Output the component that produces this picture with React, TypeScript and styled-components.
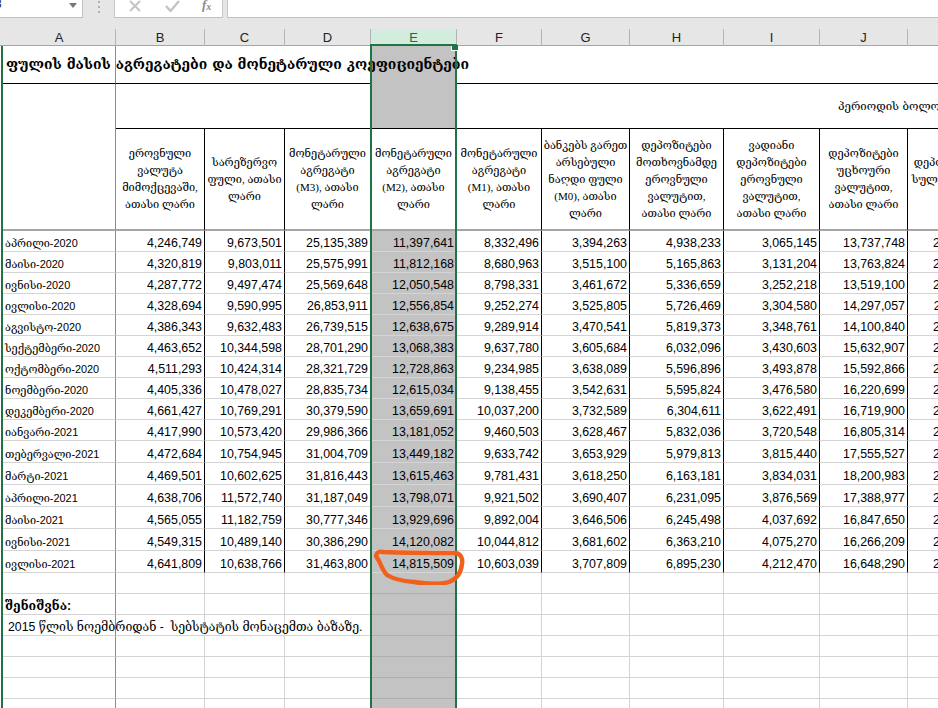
import styled, { createGlobalStyle } from "styled-components";

const GlobalStyle = createGlobalStyle`
  html, body {
    margin: 0;
    padding: 0;
    background: #fff;
  }
`;

// cell edges measured off the sheet: A..K plus one long empty column for the merged header
const COLUMN_WIDTHS = [113, 89, 80, 86, 86, 85, 88, 94, 96, 88, 83, 337];
const COLUMN_LETTERS = ["A", "B", "C", "D", "E", "F", "G", "H", "I", "J", "K", ""];
const SELECTED = 4;

const HEADERS = [
  ["ეროვნული", "ვალუტა", "მიმოქცევაში,", "ათასი ლარი"],
  ["სარეზერვო", "ფული, ათასი", "ლარი"],
  ["მონეტარული", "აგრეგატი", "(M3), ათასი", "ლარი"],
  ["მონეტარული", "აგრეგატი", "(M2), ათასი", "ლარი"],
  ["მონეტარული", "აგრეგატი", "(M1), ათასი", "ლარი"],
  ["ბანკებს გარეთ", "არსებული", "ნაღდი ფული", "(M0), ათასი", "ლარი"],
  ["დეპოზიტები", "მოთხოვნამდე", "ეროვნული", "ვალუტით,", "ათასი ლარი"],
  ["ვადიანი", "დეპოზიტები", "ეროვნული", "ვალუტით,", "ათასი ლარი"],
  ["დეპოზიტები", "უცხოური", "ვალუტით,", "ათასი ლარი"],
  ["დეპოზიტები", "სულ ვალუტა", "(M3)"],
];

const ROWS = [
  ["აპრილი-2020", "4,246,749", "9,673,501", "25,135,389", "11,397,641", "8,332,496", "3,394,263", "4,938,233", "3,065,145", "13,737,748", "2,120,310"],
  ["მაისი-2020", "4,320,819", "9,803,011", "25,575,991", "11,812,168", "8,680,963", "3,515,100", "5,165,863", "3,131,204", "13,763,824", "2,575,991"],
  ["ივნისი-2020", "4,287,772", "9,497,474", "25,569,648", "12,050,548", "8,798,331", "3,461,672", "5,336,659", "3,252,218", "13,519,100", "2,569,648"],
  ["ივლისი-2020", "4,328,694", "9,590,995", "26,853,911", "12,556,854", "9,252,274", "3,525,805", "5,726,469", "3,304,580", "14,297,057", "2,853,911"],
  ["აგვისტო-2020", "4,386,343", "9,632,483", "26,739,515", "12,638,675", "9,289,914", "3,470,541", "5,819,373", "3,348,761", "14,100,840", "2,739,515"],
  ["სექტემბერი-2020", "4,463,652", "10,344,598", "28,701,290", "13,068,383", "9,637,780", "3,605,684", "6,032,096", "3,430,603", "15,632,907", "2,701,290"],
  ["ოქტომბერი-2020", "4,511,293", "10,424,314", "28,321,729", "12,728,863", "9,234,985", "3,638,089", "5,596,896", "3,493,878", "15,592,866", "2,321,729"],
  ["ნოემბერი-2020", "4,405,336", "10,478,027", "28,835,734", "12,615,034", "9,138,455", "3,542,631", "5,595,824", "3,476,580", "16,220,699", "2,835,734"],
  ["დეკემბერი-2020", "4,661,427", "10,769,291", "30,379,590", "13,659,691", "10,037,200", "3,732,589", "6,304,611", "3,622,491", "16,719,900", "2,379,590"],
  ["იანვარი-2021", "4,417,990", "10,573,420", "29,986,366", "13,181,052", "9,460,503", "3,628,467", "5,832,036", "3,720,548", "16,805,314", "2,986,366"],
  ["თებერვალი-2021", "4,472,684", "10,754,945", "31,004,709", "13,449,182", "9,633,742", "3,653,929", "5,979,813", "3,815,440", "17,555,527", "2,004,709"],
  ["მარტი-2021", "4,469,501", "10,602,625", "31,816,443", "13,615,463", "9,781,431", "3,618,250", "6,163,181", "3,834,031", "18,200,983", "2,816,443"],
  ["აპრილი-2021", "4,638,706", "11,572,740", "31,187,049", "13,798,071", "9,921,502", "3,690,407", "6,231,095", "3,876,569", "17,388,977", "2,187,049"],
  ["მაისი-2021", "4,565,055", "11,182,759", "30,777,346", "13,929,696", "9,892,004", "3,646,506", "6,245,498", "4,037,692", "16,847,650", "2,777,346"],
  ["ივნისი-2021", "4,549,315", "10,489,140", "30,386,290", "14,120,082", "10,044,812", "3,681,602", "6,363,210", "4,075,270", "16,266,209", "2,386,290"],
  ["ივლისი-2021", "4,641,809", "10,638,766", "31,463,800", "14,815,509", "10,603,039", "3,707,809", "6,895,230", "4,212,470", "16,648,290", "2,463,800"],
];

const NOTES = ["", "შენიშვნა:", "2015 წლის ნოემბრიდან -  სებსტატის მონაცემთა ბაზაზე.", "", "", "", ""];

export default function App() {
  return (
    <Window>
      <GlobalStyle />
      <FormulaBar>
        <NameBox>
          <NameText>3</NameText>
          <NameCaret />
        </NameBox>
        <Grip>
          <GripDot />
          <GripDot />
          <GripDot />
        </Grip>
        <FormulaButtons>
          <svg width="14" height="12" viewBox="0 0 14 12">
            <path d="M2 1 L12 11 M12 1 L2 11" stroke="#c4c4c4" strokeWidth="2" fill="none" />
          </svg>
          <svg width="15" height="12" viewBox="0 0 15 12">
            <path d="M1 6 L5.5 11 L14 1" stroke="#c4c4c4" strokeWidth="2.4" fill="none" />
          </svg>
          <FxLabel>
            f<sub>x</sub>
          </FxLabel>
        </FormulaButtons>
        <FormulaInput />
      </FormulaBar>

      <ColumnHeaders>
        {COLUMN_LETTERS.map((letter, i) => (
          <ColumnHeader key={i} $selected={i === SELECTED}>
            {letter}
          </ColumnHeader>
        ))}
      </ColumnHeaders>

      <Sheet>
        <Table>
          <colgroup>
            {COLUMN_WIDTHS.map((w, i) => (
              <col key={i} width={w} />
            ))}
          </colgroup>
          <tbody>
            <tr>
              <TitleCell $edge>ფულის მასის აგრეგატები და მონეტარული კოეფიციენტები</TitleCell>
              <TitleCell colSpan={3} />
              <TitleCell $grey />
              <TitleCell colSpan={7} />
            </tr>
            <tr>
              <StubCell rowSpan={2} />
              <GroupCell colSpan={3} />
              <GroupCell $grey />
              <GroupCell colSpan={7}>პერიოდის ბოლოს</GroupCell>
            </tr>
            <tr>
              {HEADERS.map((lines, i) => (
                <HeaderCell key={i}>
                  {lines.map((line) => (
                    <HeaderLine key={line}>{line}</HeaderLine>
                  ))}
                </HeaderCell>
              ))}
              <HeaderCell />
            </tr>
            {ROWS.map(([label, ...values], r) => (
              <DataRow key={r} $tall={r >= 10}>
                <LabelCell>{label}</LabelCell>
                {values.map((value, c) => (
                  <NumberCell key={c} $grey={c + 1 === SELECTED}>
                    {value}
                  </NumberCell>
                ))}
                <NumberCell />
              </DataRow>
            ))}
            {NOTES.map((note, r) => (
              <DataRow key={r}>
                <NoteCell $bold={r === 1} $indent={r === 2}>
                  {note}
                </NoteCell>
                {COLUMN_LETTERS.slice(1).map((letter, c) => (
                  <BlankCell key={c} $grey={c + 1 === SELECTED} />
                ))}
              </DataRow>
            ))}
          </tbody>
        </Table>

        <Selection>
          <SelectionHandle />
        </Selection>

        <Scribble viewBox="0 0 100 42" width="100" height="42">
          <path
            d="M7 13 C8 9 10 8 14 9 C40 10 70 10 87 10 C92 11 94 16 93 21 C92 30 88 36 80 39 C70 42 58 41 45 39 C33 38 24 36 18 32 C14 28 12 22 10 18 Z"
            fill="none"
            stroke="#f2611c"
            strokeWidth="4.4"
            strokeLinejoin="round"
          />
        </Scribble>
      </Sheet>
    </Window>
  );
}

const Window = styled.div`
  width: 938px;
  height: 708px;
  overflow: hidden;
  background: #fff;
`;

const FormulaBar = styled.div`
  display: flex;
  height: 18px;
  background: #e6e6e6;
`;

const NameBox = styled.div`
  width: 83px;
  flex: none;
  box-sizing: border-box;
  display: flex;
  justify-content: space-between;
  background: #fff;
  border-right: 1px solid #c0c0c0;
  border-bottom: 1px solid #c0c0c0;
  overflow: hidden;
`;

const NameText = styled.span`
  margin: -3px 0 0 -5px;
  font: 12px "Liberation Sans", sans-serif;
  color: #222;
`;

const NameCaret = styled.span`
  width: 0;
  height: 0;
  margin: 3px 5px 0 0;
  border-left: 4px solid transparent;
  border-right: 4px solid transparent;
  border-top: 5px solid #777;
`;

const Grip = styled.div`
  width: 31px;
  flex: none;
  display: flex;
  flex-direction: column;
  align-items: center;
  gap: 2px;
`;

const GripDot = styled.span`
  width: 2px;
  height: 2px;
  margin-top: 1px;
  background: #b0b0b0;
`;

const FormulaButtons = styled.div`
  width: 109px;
  flex: none;
  box-sizing: border-box;
  display: flex;
  align-items: flex-start;
  gap: 23px;
  padding-left: 13px;
  background: #fff;
  border-left: 1px solid #c8c8c8;
  border-right: 1px solid #c8c8c8;
  border-bottom: 1px solid #c0c0c0;
`;

const FxLabel = styled.span`
  margin: -3px 0 0 -1px;
  font: italic bold 13px "Liberation Serif", serif;
  color: #8a8a8a;

  sub {
    font-size: 10px;
    vertical-align: -1px;
  }
`;

const FormulaInput = styled.div`
  flex: 1;
  margin-left: 4px;
  background: #fff;
  border-left: 1px solid #c8c8c8;
  border-bottom: 1px solid #c0c0c0;
`;

const ColumnHeaders = styled.div`
  display: grid;
  grid-template-columns: 3px ${COLUMN_WIDTHS.map((w) => `${w}px`).join(" ")};
  height: 28px;
  box-sizing: border-box;
  padding-top: 11px;
  background: #e6e6e6;
  border-bottom: 1px solid #a6a6a6;

  &::before {
    content: "";
  }
`;

const ColumnHeader = styled.div<{ $selected?: boolean }>`
  box-sizing: border-box;
  text-align: center;
  font: 13px/17px "Liberation Sans", sans-serif;
  color: ${(p) => (p.$selected ? "#1d6b41" : "#222")};
  background: ${(p) => (p.$selected ? "#d2ecdd" : "transparent")};
  border-right: 1px solid #b4b4b4;
  min-width: 0;
`;

const Sheet = styled.div`
  position: relative;
  margin-left: 1px;
  border-left: 2px solid #217346;
`;

const Table = styled.table`
  border-collapse: separate;
  border-spacing: 0;
  table-layout: fixed;
  width: 1325px;

  td {
    box-sizing: border-box;
    padding: 0;
    background: #fff;
  }
`;

const TitleCell = styled.td<{ $edge?: boolean; $grey?: boolean }>`
  height: 38px;
  white-space: nowrap;
  padding: 0 0 2px 3px !important;
  font: bold 13.9px "DejaVu Serif", serif;
  color: #000;
  border-bottom: ${(p) => (p.$grey ? "1px solid #c3c3c3" : "1px solid #000")};
  border-right: ${(p) => (p.$edge ? "1px solid #8c8c8c" : "0")};
  ${(p) => p.$grey && "background: #c3c3c3 !important;"}
`;

const StubCell = styled.td`
  border-right: 1px solid #8c8c8c;
  border-bottom: 2px solid #a6a6a6;
`;

const GroupCell = styled.td<{ $grey?: boolean }>`
  height: 45px;
  text-align: center;
  white-space: nowrap;
  font: 11.4px "DejaVu Serif", serif;
  color: #000;
  border-bottom: 1px solid #000;
  ${(p) => p.$grey && "background: #c3c3c3 !important;"}
`;

const HeaderCell = styled.td`
  height: 102px;
  text-align: center;
  vertical-align: middle;
  white-space: nowrap;
  overflow: hidden;
  border-right: 1px solid #000;
  border-bottom: 2px solid #a6a6a6;
`;

const HeaderLine = styled.div`
  font: 11px/17px "Liberation Serif", "DejaVu Serif", serif;
  color: #000;
`;

const DataRow = styled.tr<{ $tall?: boolean }>`
  height: ${(p) => (p.$tall ? 22 : 21)}px;
`;

const LabelCell = styled.td`
  padding-left: 2px !important;
  vertical-align: bottom;
  white-space: nowrap;
  font: 10.9px/16px "Liberation Sans", "DejaVu Serif", serif;
  color: #000;
  border-right: 1px solid #8c8c8c;
  border-bottom: 1px solid #d4d4d4;
`;

const NumberCell = styled.td<{ $grey?: boolean }>`
  padding-right: 2px !important;
  vertical-align: bottom;
  text-align: right;
  white-space: nowrap;
  font: 12.4px/16px "Liberation Sans", sans-serif;
  color: #000;
  border-right: 1px solid #000;
  border-bottom: 1px solid #d4d4d4;
  ${(p) => p.$grey && "background: #c3c3c3 !important;"}
`;

const NoteCell = styled.td<{ $bold?: boolean; $indent?: boolean }>`
  padding-left: ${(p) => (p.$indent ? 5 : 2)}px !important;
  vertical-align: bottom;
  white-space: pre;
  font: ${(p) => (p.$bold ? "bold 12.4px" : "normal 12.3px")}/16px "Liberation Sans", "DejaVu Serif", serif;
  color: #000;
  border-right: 1px solid #8c8c8c;
  border-bottom: 1px solid #d4d4d4;
`;

const BlankCell = styled.td<{ $grey?: boolean }>`
  border-right: 1px solid #d4d4d4;
  border-bottom: 1px solid ${(p) => (p.$grey ? "#aeaeae" : "#d4d4d4")};
  ${(p) => p.$grey && "background: #c3c3c3 !important;"}
`;

const Selection = styled.div`
  position: absolute;
  top: -2px;
  left: 367px;
  bottom: 0;
  width: 87px;
  box-sizing: border-box;
  border: 2px solid #217346;
  pointer-events: none;
`;

const SelectionHandle = styled.span`
  position: absolute;
  top: -1px;
  right: -3px;
  width: 6px;
  height: 5px;
  background: #217346;
  box-shadow: -1px 1px 0 #fff;
`;

const Scribble = styled.svg`
  position: absolute;
  top: 497px;
  left: 366px;
  pointer-events: none;
`;
